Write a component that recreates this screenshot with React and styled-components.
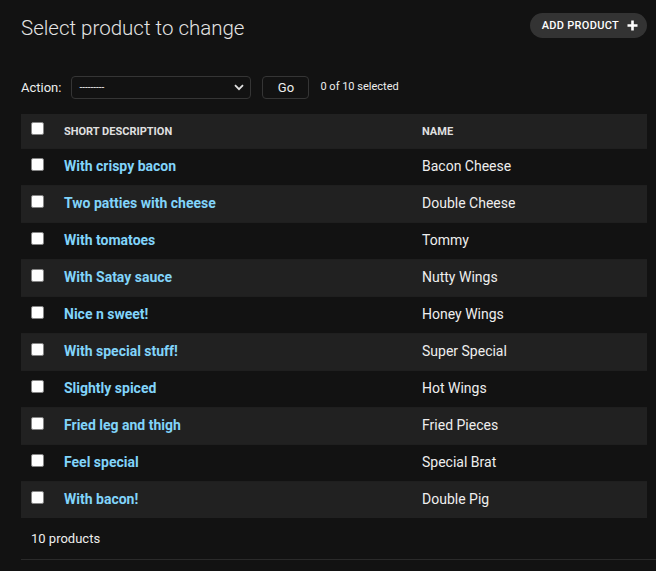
import styled, { createGlobalStyle } from "styled-components";

const products = [
    ["With crispy bacon", "Bacon Cheese"],
    ["Two patties with cheese", "Double Cheese"],
    ["With tomatoes", "Tommy"],
    ["With Satay sauce", "Nutty Wings"],
    ["Nice n sweet!", "Honey Wings"],
    ["With special stuff!", "Super Special"],
    ["Slightly spiced", "Hot Wings"],
    ["Fried leg and thigh", "Fried Pieces"],
    ["Feel special", "Special Brat"],
    ["With bacon!", "Double Pig"],
];

export default function App() {
    return (
        <>
            <Global />
            <SCContent>
                <SCHeader>
                    <h1>Select product to change</h1>
                    <SCAddButton>
                        ADD PRODUCT
                        <svg width="11" height="11" viewBox="0 0 11 11">
                            <path d="M5.5 0.5v10M0.5 5.5h10" stroke="#fff" strokeWidth="2.6" />
                        </svg>
                    </SCAddButton>
                </SCHeader>
                <SCActions>
                    <label>Action:</label>
                    <SCSelect>
                        <span>---------</span>
                        <svg width="10" height="7" viewBox="0 0 10 7">
                            <path d="M1 1.2l4 4 4-4" stroke="#e0e0e0" strokeWidth="1.8" fill="none" />
                        </svg>
                    </SCSelect>
                    <SCGo>Go</SCGo>
                    <span className="counter">0 of 10 selected</span>
                </SCActions>
                <SCTable>
                    <thead>
                        <tr>
                            <th className="check"><SCCheck type="checkbox" /></th>
                            <th className="desc">Short description</th>
                            <th>Name</th>
                        </tr>
                    </thead>
                    <tbody>
                        {products.map(([desc, name], i) => (
                            <SCRow key={name} $alt={i % 2 === 1}>
                                <td className="check"><SCCheck type="checkbox" /></td>
                                <td><a href="#">{desc}</a></td>
                                <td>{name}</td>
                            </SCRow>
                        ))}
                    </tbody>
                </SCTable>
                <SCPaginator>10 products</SCPaginator>
            </SCContent>
        </>
    );
}

const Global = createGlobalStyle`
    html, body {
        margin: 0;
        background: #121212;
        color: #eeeeee;
        font-family: Roboto, "Noto Sans", sans-serif;
    }
`;

const SCContent = styled.div`
    padding: 13px 0 0 21px;
    min-height: 571px;
    box-sizing: border-box;
`;

const SCHeader = styled.div`
    display: flex;
    justify-content: space-between;
    align-items: flex-start;
    height: 30px;
    padding-right: 9px;

    h1 {
        margin: 0;
        font-size: 20.5px;
        font-weight: 300;
        line-height: 30px;
        color: #e4e4e4;
    }
`;

const SCAddButton = styled.a`
    display: flex;
    align-items: center;
    gap: 8px;
    height: 25px;
    box-sizing: border-box;
    padding: 0 9px 0 12px;
    background: #333333;
    border-radius: 13px;
    color: #ffffff;
    font-size: 11px;
    font-weight: 500;
    letter-spacing: 0.3px;
`;

const SCActions = styled.div`
    display: flex;
    align-items: center;
    margin-top: 33px;
    height: 23px;
    font-size: 13px;

    label {
        color: #eeeeee;
        margin-right: 10px;
    }

    .counter {
        font-size: 11px;
        color: #eeeeee;
        margin-left: 11px;
        margin-top: -3px;
    }
`;

const SCSelect = styled.div`
    display: flex;
    align-items: center;
    justify-content: space-between;
    width: 180px;
    height: 23px;
    box-sizing: border-box;
    padding: 0 6px 0 7px;
    border: 1px solid #353535;
    border-radius: 4px;
    background: #121212;

    span {
        font-size: 10px;
        color: #eeeeee;
    }
`;

const SCGo = styled.button`
    margin-left: 11px;
    width: 47px;
    height: 23px;
    border: 1px solid #353535;
    border-radius: 4px;
    background: #121212;
    color: #eeeeee;
    font-family: Roboto, sans-serif;
    font-size: 13px;
    padding: 0;
`;

const SCTable = styled.table`
    margin-top: 15px;
    width: 626px;
    border-collapse: collapse;

    th {
        background: #212121;
        height: 34px;
        padding: 0;
        text-align: left;
        font-size: 11px;
        font-weight: 700;
        text-transform: uppercase;
        color: #e0e0e0;
        vertical-align: middle;
    }

    th.check {
        width: 43px;
        padding-left: 10px;
        vertical-align: top;
        padding-top: 8px;
        box-sizing: border-box;
    }

    th.desc {
        width: 358px;
    }
`;

const SCRow = styled.tr`
    background: ${(p) => (p.$alt ? "#212121" : "#121212")};
    border-top: 1px solid #1f1f1f;

    td {
        height: 34px;
        padding: 0 0 2px;
        font-size: 14px;
        color: #eeeeee;
        vertical-align: middle;
    }

    td.check {
        padding-left: 10px;
        padding-top: 9px;
        vertical-align: top;
        box-sizing: border-box;
    }

    a {
        color: #81d4fa;
        font-weight: 700;
        text-decoration: none;
    }
`;

const SCCheck = styled.input`
    appearance: none;
    display: block;
    margin: 0;
    width: 13px;
    height: 13px;
    background: #ffffff;
    border: 1px solid #858585;
    border-radius: 2px;
`;

const SCPaginator = styled.div`
    height: 42px;
    box-sizing: border-box;
    padding: 13px 0 0 10px;
    border-bottom: 1px solid #2a2a2a;
    font-size: 13px;
    color: #eeeeee;
`;
